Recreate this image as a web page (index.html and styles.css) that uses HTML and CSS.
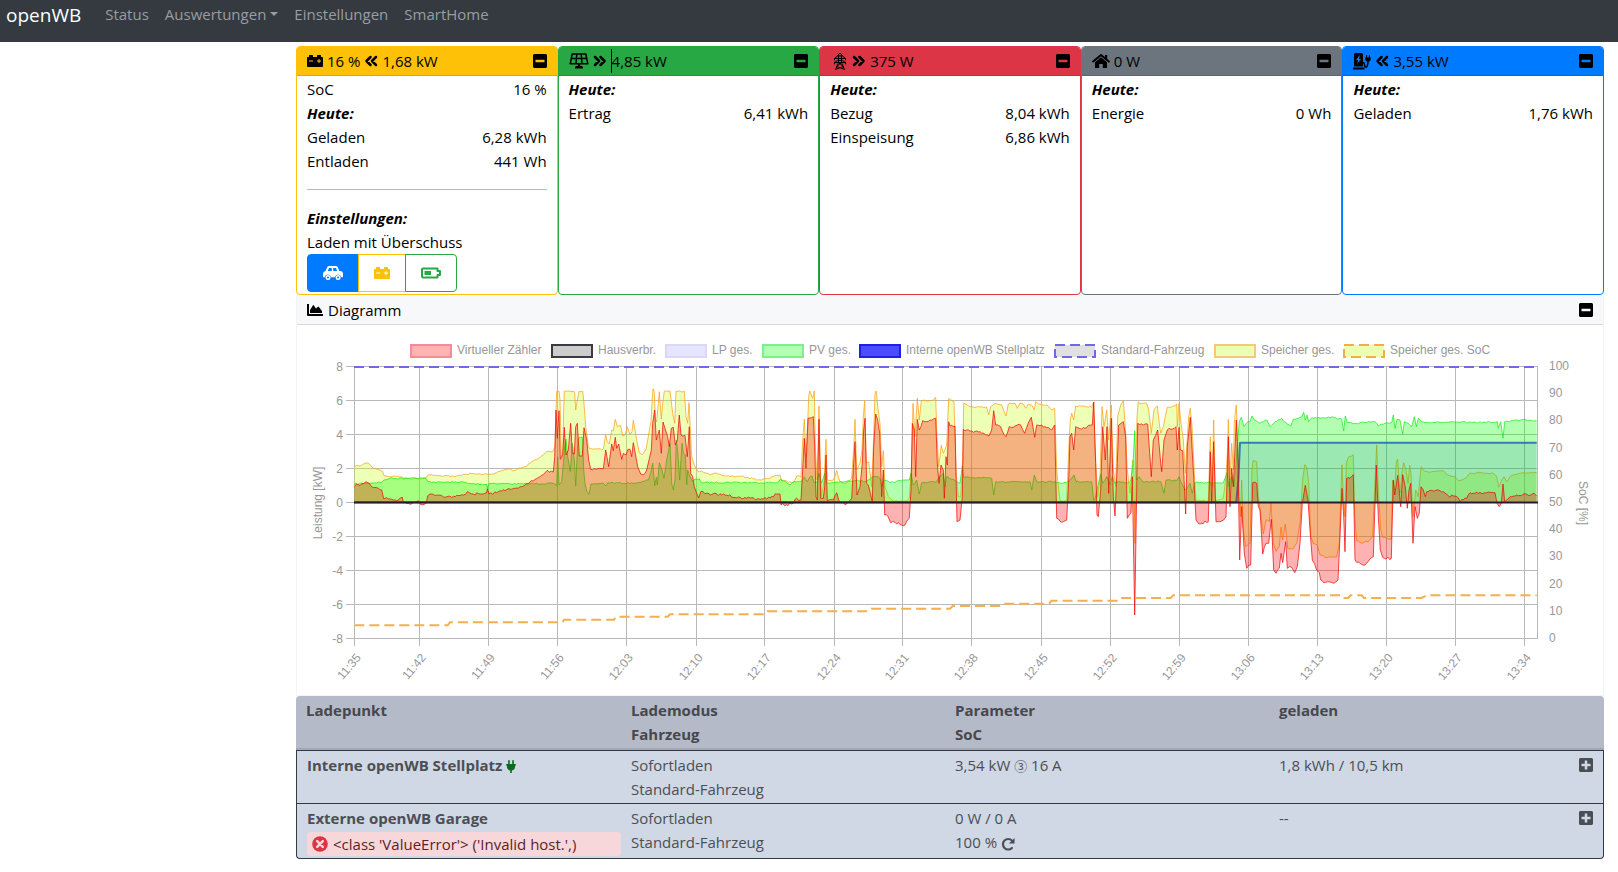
FILE: index.html
```
<!DOCTYPE html>
<html lang="de">
<head>
<meta charset="utf-8">
<title>openWB</title>
<link rel="stylesheet" href="styles.css">
</head>
<body>
<svg class="sprite" aria-hidden="true">
  <symbol id="i-minus" viewBox="0 0 448 512"><path d="M400 32H48C21.500 32 0 53.500 0 80v352c0 26.500 21.500 48 48 48h352c26.500 0 48-21.500 48-48V80c0-26.500-21.500-48-48-48zM92 296c-6.600 0-12-5.400-12-12v-56c0-6.600 5.400-12 12-12h264c6.600 0 12 5.400 12 12v56c0 6.600-5.400 12-12 12H92z"/></symbol>
  <symbol id="i-plus" viewBox="0 0 448 512"><path d="M400 32H48C21.500 32 0 53.500 0 80v352c0 26.500 21.500 48 48 48h352c26.500 0 48-21.500 48-48V80c0-26.500-21.500-48-48-48zM368 284c0 6.600-5.400 12-12 12h-92v92c0 6.600-5.400 12-12 12h-56c-6.600 0-12-5.400-12-12v-92H92c-6.600 0-12-5.400-12-12v-56c0-6.600 5.400-12 12-12h92v-92c0-6.600 5.400-12 12-12h56c6.600 0 12 5.400 12 12v92h92c6.600 0 12 5.400 12 12v56z"/></symbol>
  <symbol id="i-battery" viewBox="0 0 512 512"><path d="M480 128h-32V80c0-8.840-7.160-16-16-16h-96c-8.840 0-16 7.160-16 16v48H192V80c0-8.840-7.160-16-16-16H80c-8.840 0-16 7.160-16 16v48H32c-17.670 0-32 14.330-32 32v256c0 17.670 14.330 32 32 32h448c17.670 0 32-14.330 32-32V160c0-17.670-14.330-32-32-32zM192 264c0 4.420-3.580 8-8 8H72c-4.420 0-8-3.580-8-8v-16c0-4.420 3.580-8 8-8h112c4.420 0 8 3.580 8 8v16zm256 0c0 4.420-3.580 8-8 8h-40v40c0 4.420-3.580 8-8 8h-16c-4.420 0-8-3.580-8-8v-40h-40c-4.420 0-8-3.580-8-8v-16c0-4.420 3.580-8 8-8h40v-40c0-4.420 3.580-8 8-8h16c4.420 0 8 3.580 8 8v40h40c4.420 0 8 3.580 8 8v16z"/></symbol>
  <symbol id="i-left" viewBox="0 0 14 16"><path class="line bold" d="M6.500 4 2.500 8l4 4M12 4 8 8l4 4"/></symbol>
  <symbol id="i-right" viewBox="0 0 14 16"><path class="line bold" d="M2 4l4 4-4 4M7.500 4l4 4-4 4"/></symbol>
  <symbol id="i-solar" viewBox="0 0 20 16"><path class="line w1" d="M3.200 1h13.600l2 9.800H1.200zM2.400 5.500h15.200M7.800 1 7 10.800M12.200 1l.8 9.800"/><path d="M8.800 11h2.400v2h1.300a1.500 1.500 0 0 1 1.500 1.500v1H6v-1A1.500 1.500 0 0 1 7.500 13h1.300z"/></symbol>
  <symbol id="i-pylon" viewBox="-3 0 18 18"><path class="line thin" d="M4.500 4 7 1l2.500 3M1.500 6.500 4.500 4h5l3 2.500v1.500M1.500 6.500V8M1.500 6.500h11M1.500 10.500l3-2h5l3 2V12M1.500 10.500V12M1.500 10.500h11M5.500 4v6.500l-3 7M8.500 4v6.500l3 7M5.500 10.500l5 4M8.500 10.500l-5 4M3.500 14.500l7 2.500M10.500 14.500l-7 2.500"/></symbol>
  <symbol id="i-home" viewBox="0 0 18 16"><path class="line w2" d="M1.200 8.500 9 2l7.800 6.500"/><path d="M3 9.200 9 4.200l6 5V14.500a.5.500 0 0 1-.5.500h-3.700v-4H7.200v4H3.500a.5.500 0 0 1-.5-.5zM13 2h2.200v4.600L13 4.700z"/></symbol>
  <symbol id="i-station" viewBox="0 0 18 18"><path fill-rule="evenodd" d="M2.500 1h6A1.500 1.500 0 0 1 10 2.500V14.500H1V2.500A1.500 1.500 0 0 1 2.500 1zM6.300 3.500 3 8h2.100l-.8 3.500L8 7H5.900l1-3.500zM0 15.500h11.500v2H0z"/><path class="line w1" d="M10 10.500c1.600 0 1.400 2 1.700 3.500.3 1.500 2 1.500 2.500 0 .4-1.500.8-2.500.8-4"/><path d="M12.300 5.500h5.400V7a2.700 2.700 0 0 1-5.400 0zM13 3.300h1.200v2.200H13zM15.800 3.300H17v2.200h-1.200z"/></symbol>
  <symbol id="i-car" viewBox="0 0 20 16"><path fill-rule="evenodd" d="M6.200 1h6.600c.8 0 1.500.4 1.900 1.100L16.300 6h.7a3 3 0 0 1 3 3v2.500a.7.700 0 0 1-.7.700h-1.100a3.200 3.200 0 0 0-6.300 0H8.100a3.200 3.200 0 0 0-6.300 0H.7a.7.700 0 0 1-.7-.7V9a3 3 0 0 1 2.500-3l1.700-3.800a2.200 2.200 0 0 1 2-1.200zM4.700 6h4.100V3H6.100zM10.200 3V6h4L12.900 3z"/><path fill-rule="evenodd" d="M2.500 12.500a2.500 2.500 0 1 0 5 0 2.500 2.500 0 1 0-5 0zm1.500 0a1 1 0 1 0 2 0 1 1 0 1 0-2 0zM12.600 12.500a2.500 2.500 0 1 0 5 0 2.500 2.500 0 1 0-5 0zm1.500 0a1 1 0 1 0 2 0 1 1 0 1 0-2 0z"/></symbol>
  <symbol id="i-half" viewBox="0 0 20 16"><path class="line w2" d="M2 3.500h14.500v2.500H19v4h-2.500v2.500H2a1 1 0 0 1-1-1v-7a1 1 0 0 1 1-1z"/><path d="M3.500 6H10v4H3.500z"/></symbol>
  <symbol id="i-area" viewBox="0 0 16 16"><path d="M0 2h2v10h14v2H1a1 1 0 0 1-1-1zM3 11V8l3-4.800a.4.400 0 0 1 .7 0L9 6.500l2-1.800a.5.500 0 0 1 .7.100L15 9v2z"/></symbol>
  <symbol id="i-plug" viewBox="0 0 12 16"><path d="M2.500 1a1 1 0 0 1 2 0v4h-2zM7.500 1a1 1 0 0 1 2 0v4h-2zM.5 5h11a.5.500 0 0 1 .5.500v1a.5.500 0 0 1-.5.500H11v1a5 5 0 0 1-4 4.900V16H5v-3.100A5 5 0 0 1 1 8V7H.5a.5.500 0 0 1-.5-.5v-1A.5.500 0 0 1 .5 5z"/></symbol>
  <symbol id="i-error" viewBox="0 0 16 16"><circle cx="8" cy="8" r="7.800"/><path class="cross" d="m5.200 5.200 5.600 5.600M10.800 5.200l-5.600 5.600"/></symbol>
  <symbol id="i-redo" viewBox="0 0 16 16"><path class="line bold" d="M12.500 12.500A6 6 0 1 1 12.500 4"/><path d="M15.500 1v6.500H9z"/></symbol>
</svg>

<nav class="navbar">
  <a class="brand" href="#">openWB</a>
  <a class="nav-link" href="#">Status</a>
  <a class="nav-link dropdown" href="#">Auswertungen</a>
  <a class="nav-link" href="#">Einstellungen</a>
  <a class="nav-link" href="#">SmartHome</a>
</nav>

<main class="content">
  <section class="cards">
    <article class="card yellow">
      <header class="card-head"><svg class="icon"><use href="#i-battery"/></svg><span>16 %</span><svg class="icon arrows"><use href="#i-left"/></svg><span>1,68 kW</span><button class="toggle" aria-label="Einklappen"><svg class="icon sq"><use href="#i-minus"/></svg></button></header>
      <div class="card-body">
        <div class="row"><span>SoC</span><span>16 %</span></div>
        <div class="title">Heute:</div>
        <div class="row"><span>Geladen</span><span>6,28 kWh</span></div>
        <div class="row"><span>Entladen</span><span>441 Wh</span></div>
        <hr class="divider">
        <div class="title">Einstellungen:</div>
        <div>Laden mit Überschuss</div>
        <div class="btn-group">
          <button class="btn car" aria-label="Fahrzeug"><svg class="icon wide"><use href="#i-car"/></svg></button>
          <button class="btn storage" aria-label="Speicher"><svg class="icon"><use href="#i-battery"/></svg></button>
          <button class="btn soc" aria-label="Mindest-SoC"><svg class="icon wide"><use href="#i-half"/></svg></button>
        </div>
      </div>
    </article>
    <article class="card green">
      <header class="card-head"><svg class="icon wide"><use href="#i-solar"/></svg><svg class="icon arrows"><use href="#i-right"/></svg><span class="caret">4,85 kW</span><button class="toggle" aria-label="Einklappen"><svg class="icon sq"><use href="#i-minus"/></svg></button></header>
      <div class="card-body">
        <div class="title">Heute:</div>
        <div class="row"><span>Ertrag</span><span>6,41 kWh</span></div>
      </div>
    </article>
    <article class="card red">
      <header class="card-head"><svg class="icon tall"><use href="#i-pylon"/></svg><svg class="icon arrows"><use href="#i-right"/></svg><span>375 W</span><button class="toggle" aria-label="Einklappen"><svg class="icon sq"><use href="#i-minus"/></svg></button></header>
      <div class="card-body">
        <div class="title">Heute:</div>
        <div class="row"><span>Bezug</span><span>8,04 kWh</span></div>
        <div class="row"><span>Einspeisung</span><span>6,86 kWh</span></div>
      </div>
    </article>
    <article class="card gray">
      <header class="card-head"><svg class="icon house"><use href="#i-home"/></svg><span>0 W</span><button class="toggle" aria-label="Einklappen"><svg class="icon sq"><use href="#i-minus"/></svg></button></header>
      <div class="card-body">
        <div class="title">Heute:</div>
        <div class="row"><span>Energie</span><span>0 Wh</span></div>
      </div>
    </article>
    <article class="card blue">
      <header class="card-head"><svg class="icon tall"><use href="#i-station"/></svg><svg class="icon arrows"><use href="#i-left"/></svg><span>3,55 kW</span><button class="toggle" aria-label="Einklappen"><svg class="icon sq"><use href="#i-minus"/></svg></button></header>
      <div class="card-body">
        <div class="title">Heute:</div>
        <div class="row"><span>Geladen</span><span>1,76 kWh</span></div>
      </div>
    </article>
  </section>

  <section class="diagram">
    <header class="diagram-head"><svg class="icon"><use href="#i-area"/></svg><span>Diagramm</span><button class="toggle" aria-label="Einklappen"><svg class="icon sq"><use href="#i-minus"/></svg></button></header>
    <svg class="chart" id="chart" viewBox="297 325 1306 370" role="img" aria-label="Leistungsverlauf"></svg>
  </section>

  <table class="points">
    <colgroup><col class="first"><col class="c"><col class="c"><col></colgroup>
    <thead>
      <tr><th>Ladepunkt</th><th>Lademodus<br>Fahrzeug</th><th>Parameter<br>SoC</th><th>geladen</th></tr>
    </thead>
    <tbody>
      <tr>
        <td><b>Interne openWB Stellplatz</b> <svg class="icon plug"><use href="#i-plug"/></svg></td>
        <td>Sofortladen<br>Standard-Fahrzeug</td>
        <td>3,54 kW <span class="phase">③</span> 16 A</td>
        <td><div class="row"><span>1,8 kWh / 10,5 km</span><button class="toggle" aria-label="Ausklappen"><svg class="icon sq"><use href="#i-plus"/></svg></button></div></td>
      </tr>
      <tr>
        <td><b>Externe openWB Garage</b><div class="alert"><svg class="icon err"><use href="#i-error"/></svg><span>&lt;class 'ValueError'&gt; ('Invalid host.',)</span></div></td>
        <td>Sofortladen<br>Standard-Fahrzeug</td>
        <td>0 W / 0 A<br>100 % <svg class="icon redo"><use href="#i-redo"/></svg></td>
        <td><div class="row"><span>--</span><button class="toggle" aria-label="Ausklappen"><svg class="icon sq"><use href="#i-plus"/></svg></button></div></td>
      </tr>
    </tbody>
  </table>
</main>
<script src="chart.js"></script>
</body>
</html>
```
FILE: styles.css
```
* { box-sizing: border-box; }
body {
  margin: 0;
  background: #fff;
  color: #000;
  font: 15px/24px "Open Sans", "Noto Sans", sans-serif;
}
.sprite { position: absolute; width: 0; height: 0; }
.icon { width: 16px; height: 16px; fill: currentColor; flex: none; vertical-align: middle; }
.icon.wide { width: 20px; }
.icon.arrows { width: 14px; }
.icon.sq { width: 14px; }
.icon.tall { width: 18px; height: 18px; }
.icon.house { width: 18px; }
.line { fill: none; stroke: currentColor; stroke-linecap: round; stroke-linejoin: round; }
.bold { stroke-width: 2.5; }
.w2 { stroke-width: 2; }
.w1 { stroke-width: 1.5; }
.thin { stroke-width: 1; }
.cross { stroke: #f8d7da; stroke-width: 2.5; stroke-linecap: round; }

.navbar {
  display: flex;
  align-items: flex-start;
  height: 42px;
  padding: 0 6px;
  background: #343a40;
}
.brand { margin-right: 16px; color: #fff; font-size: 19px; line-height: 30px; text-decoration: none; }
.nav-link { padding: 2px 8px; color: #9a9da0; text-decoration: none; }
.dropdown::after {
  content: "";
  display: inline-block;
  margin-left: 4px;
  vertical-align: 4px;
  border: 4px solid transparent;
  border-top-color: currentColor;
  border-bottom: 0;
}

.content { padding: 4px 14px 12px 296px; }
.cards { display: grid; grid-template-columns: repeat(5, 1fr); }
.card { border: 1px solid var(--c); border-radius: 4px; overflow: hidden; }
.yellow { --c: #ffc107; }
.green { --c: #28a745; }
.red { --c: #dc3545; }
.gray { --c: #6c757d; }
.blue { --c: #007bff; }
.card-head {
  display: flex;
  align-items: center;
  gap: 4px;
  padding: 2px 10px;
  background: var(--c);
  border-bottom: 1px solid rgba(0, 0, 0, .125);
}
.card-body { padding: 1px 10px 2px; }
.row { display: flex; justify-content: space-between; }
.title { font-weight: 700; font-style: italic; }
.toggle { display: flex; align-items: center; margin-left: auto; padding: 0; border: 0; background: none; color: inherit; }
.caret { border-left: 1px solid #000; }
.divider { height: 1px; margin: 16px 0; border: 0; background: #eabb35; }
.btn-group { display: flex; }
.btn {
  display: flex;
  align-items: center;
  height: 38px;
  padding: 0 15px;
  border: 1px solid;
  background: #fff;
}
.btn + .btn { margin-left: -1px; }
.car { background: #007bff; border-color: #007bff; border-radius: 4px 0 0 4px; color: #fff; }
.storage { color: #ffc107; }
.soc { color: #28a745; border-radius: 0 4px 4px 0; }

.diagram { border: 1px solid #f4f4f4; border-top: 0; }
.diagram-head {
  display: flex;
  align-items: center;
  gap: 5px;
  padding: 3px 10px 2px;
  background: #f7f8f9;
  border-bottom: 1px solid #d6d7d8;
}
.chart { display: block; width: 100%; font: 12px "Liberation Sans", Arial, sans-serif; }
.chart text { fill: #979797; }
.grid { stroke: #b9b9b9; stroke-width: 1; }

.points { width: 100%; table-layout: fixed; border-spacing: 0; color: #4b4f54; }
.points .first { width: 325px; }
.points .c { width: 324px; }
.points th, .points td { padding: 2px 10px; text-align: left; vertical-align: top; }
.points th { background: #b5bac8; border-bottom: 2px solid #a3a8b5; color: #45484d; }
.points th:first-child { border-radius: 4px 0 0 0; }
.points th:last-child { border-radius: 0 4px 0 0; }
.points td { background: #d0d7e5; border-top: 1px solid #343a40; }
.points td:first-child { border-left: 1px solid #343a40; padding-right: 0; }
.points td:last-child { border-right: 1px solid #343a40; }
.points tr:last-child td { border-bottom: 1px solid #343a40; }
.points tr:last-child td:first-child { border-bottom-left-radius: 4px; }
.points tr:last-child td:last-child { border-bottom-right-radius: 4px; }
.alert { display: flex; align-items: center; gap: 5px; margin-top: 2px; padding: 0 5px; border-radius: 4px; background: #f8d7da; color: #5b1f27; }
.plug { width: 10px; height: 13px; color: #0a6b1c; }
.err { color: #dc3545; }
.redo { width: 14px; height: 14px; }
.phase { font-family: "Noto Sans CJK JP", sans-serif; font-size: 13px; line-height: 20px; }
```
FILE: chart.js
```
// Samples are stored in blocks; every block has its own origin and a
// resolution of three steps per chart unit: [originX, originY, "x,y x,y ..."].
const A = [340, 360], B = [730, 330], C = [1160, 330];

const storage = [
  [...A, "43,320 55,317 65,316 78,309 88,312 97,322 110,327 120,330 128,335 132,347 150,350 160,348 186,350 190,355 215,353 240,356 258,354 263,346 275,344 300,347 320,347 345,350 370,343 395,341 430,343 450,343 470,338 490,331 508,326 520,333 540,324 555,320 575,305 600,292 615,280 620,275 638,275 645,260 648,150 650,95 657,94 660,120 664,290 668,280 671,150 673,94 702,94 704,100 707,150 712,120 717,94 728,94 731,120 737,200 745,260 750,267 790,268 793,250 797,224 802,245 808,252 815,210 820,212 826,178 832,200 842,197 848,228 855,225 862,200 870,225 876,215 880,181 886,215 892,250 898,278 907,284 918,268 925,230 933,185 936,130 939,86 943,95 946,175 950,185 958,95 962,150 964,178 968,130 973,94 990,94 998,160 1004,190 1008,94 1033,94 1038,170 1043,190 1047,128 1050,190 1055,290 1063,315 1075,335 1085,333 1110,345 1130,340 1150,347 1195,350"],
  [...B, "30,438 50,442 90,450 120,445 135,436 150,435 155,452 190,458 200,438 213,440 218,330 223,268 228,380 233,280 236,200 239,183 248,205 253,183 256,350 261,450 264,350 267,228 270,380 274,500 282,455 288,328 292,450 310,450 320,422 330,455 345,462 365,445 372,340 375,268 380,420 390,400 396,360 400,260 404,212 409,400 416,395 425,470 430,350 435,190 439,183 443,230 450,280 455,410 460,362 465,470 475,500 490,513 530,513 538,505 545,400 549,220 555,320 562,205 568,270 574,212 610,210 617,202 620,300 626,410 634,346 640,370 650,345 656,206 672,215 678,420 685,500 692,500 698,400 701,220 720,230 770,232 776,255 782,230 795,220 815,225 828,258 835,222 855,220 862,235 870,220 880,222 887,235 895,222 905,225 913,240 917,215 925,222 955,228 965,240 974,235 980,420 990,512 1010,512 1017,340 1021,270 1025,250 1031,270 1037,228 1060,228 1085,232 1091,216 1096,380 1103,500 1110,440 1116,230 1122,290 1130,240 1136,330 1144,225 1150,420 1157,470 1163,260 1172,225 1180,212 1186,290 1192,420 1200,490 1208,390 1211,400 1215,640 1218,400 1221,260 1225,215 1230,222 1250,220 1256,240 1264,310 1272,240 1282,228 1288,280"],
  [...C, "2,310 10,290 22,232 45,228 50,222 52,290 57,220 63,280 70,330 76,430 80,350 86,260 91,235 97,300 103,430 108,512 145,512 151,320 156,470 161,270 167,512 190,505 198,440 203,350 205,268 210,450 215,340 220,420 223,280 227,235 229,225 233,330 238,500 241,560 245,450 250,600 257,650 270,640 276,420 279,392 290,395 295,500 303,560 310,612 318,570 328,575 333,520 340,640 348,664 358,650 363,592 368,630 376,582 383,655 400,655 410,640 420,580 428,450 434,404 440,410 446,460 452,620 460,640 472,645 480,675 500,683 530,680 538,640 543,480 546,404 551,520 555,560 559,400 565,382 580,374 584,560 590,632 605,640 625,635 638,620 643,500 650,345 655,480 662,600 668,622 694,628 698,452 704,480 709,395 713,388 720,490 725,430 731,398 738,420 744,460 749,406 753,430 759,560 767,480 775,500 780,440 784,410 795,425 820,424 850,422 862,435 885,440 895,452 915,445 930,430 960,428 1000,430 1010,440 1016,472 1025,450 1032,440 1040,455 1055,435 1090,428 1130,428"]
];
const meter = [
  [...A, "43,380 55,374 70,372 80,366 88,370 95,380 110,383 125,390 131,416 140,413 155,418 175,420 187,412 190,427 205,430 215,432 235,422 240,432 258,430 263,408 275,402 300,405 320,410 345,410 370,405 382,395 400,402 430,402 440,398 442,386 447,402 470,398 490,389 515,388 535,384 555,375 575,362 600,350 615,338 622,331 640,336 644,290 648,150 652,235 657,152 661,298 668,285 673,202 678,285 685,270 692,190 697,280 703,282 707,200 712,190 718,288 727,288 732,203 740,240 746,300 752,328 790,326 797,270 806,320 815,252 820,272 826,232 830,265 836,252 845,298 850,280 858,285 864,268 870,268 875,290 880,248 886,280 893,320 902,342 910,345 920,330 927,300 934,270 938,190 944,150 949,240 958,210 964,280 969,186 975,205 983,230 988,260 994,205 1000,202 1006,255 1012,240 1018,165 1023,225 1035,226 1042,290 1048,200 1052,340 1058,350 1063,380 1070,400 1076,414 1082,395 1100,400 1110,405 1130,402 1160,406 1195,411"],
  [...B, "30,502 50,505 80,508 120,503 140,492 150,492 153,525 185,522 200,505 213,510 219,400 223,325 228,415 234,265 250,260 254,350 258,500 262,510 267,268 272,505 280,505 284,470 288,375 292,512 310,510 320,488 328,515 345,524 365,505 371,400 375,335 381,495 390,470 397,400 401,300 405,265 410,460 415,465 427,515 431,350 437,252 443,270 449,310 455,500 460,420 464,555 474,560 482,578 495,577 510,583 525,585 538,565 543,480 547,280 553,300 557,440 562,268 568,300 578,272 600,270 617,265 622,400 627,460 633,405 640,420 643,505 648,380 652,405 656,275 660,288 675,288 681,575 690,570 697,500 700,298 720,303 750,305 777,318 785,300 791,242 797,285 812,290 828,320 838,290 855,288 862,285 872,285 884,310 890,292 904,262 914,322 920,285 935,285 945,290 965,300 974,285 980,565 995,577 1010,570 1016,450 1020,320 1025,310 1031,360 1037,290 1050,296 1070,292 1087,285 1091,216 1097,400 1101,555 1105,560 1112,480 1118,290 1126,390 1131,290 1136,490 1144,265 1150,500 1155,558 1162,400 1166,285 1180,275 1187,320 1192,565 1203,550 1207,440 1214,855 1219,560 1223,280 1240,285 1253,282 1259,370 1264,440 1270,330 1283,300 1288,350"],
  [...C, "2,400 5,425 12,330 22,300 48,290 52,360 57,292 61,360 68,362 77,552 82,350 91,262 98,390 103,470 108,570 115,580 145,575 151,365 155,520 161,335 168,575 185,573 198,560 205,320 210,530 215,415 220,470 229,270 234,400 239,690 245,530 253,670 260,715 272,705 278,458 290,460 295,530 300,540 308,672 318,640 326,640 334,568 341,720 348,730 358,715 363,670 368,698 377,635 382,715 395,712 404,728 412,710 420,640 427,520 436,466 444,510 450,600 457,690 470,720 478,728 482,750 497,757 520,760 534,750 540,620 546,475 551,560 555,665 560,445 570,445 580,434 585,690 600,700 615,705 640,680 645,520 649,405 655,560 661,660 668,682 694,686 700,450 704,495 713,436 722,530 728,434 736,470 742,535 747,480 752,460 759,640 765,530 772,565 778,550 783,470 790,480 796,500 800,485 825,482 850,485 865,497 890,500 900,515 920,505 930,488 960,487 1005,488 1011,520 1018,530 1024,520 1029,462 1034,515 1050,500 1070,495 1090,492 1115,493 1122,490 1130,498"]
];
const solar = [
  [...A, "43,372 125,367 132,360 150,355 258,355 264,365 300,367 370,366 385,371 440,373 442,385 447,370 550,372 640,370 650,378 653,290 657,375 665,365 671,300 674,260 678,237 683,290 691,335 697,250 703,300 707,378 714,235 728,233 731,330 735,372 741,395 747,403 753,372 790,370 797,378 803,368 860,370 900,368 925,360 932,340 938,310 944,378 949,352 952,375 958,308 966,330 972,355 980,300 990,250 995,370 1000,390 1005,360 1009,240 1013,275 1019,360 1026,250 1030,280 1036,285 1040,375 1043,330 1050,350 1058,365 1065,357 1078,357 1083,368 1195,367"],
  [...B, "30,458 140,458 151,448 170,458 180,465 192,455 215,455 222,440 232,455 240,440 246,438 252,458 262,455 267,430 275,460 284,430 290,460 345,455 380,450 405,455 430,440 440,440 450,445 455,470 462,450 480,458 525,450 538,450 543,430 550,465 560,450 568,492 575,458 620,455 628,440 640,430 645,470 650,440 680,455 690,460 697,408 701,442 785,445 791,495 797,455 900,455 905,480 913,435 920,455 975,455 985,458 1010,458 1020,450 1032,435 1038,455 1085,455 1092,520 1103,470 1112,432 1118,460 1130,440 1140,465 1147,440 1153,458 1165,455 1195,460 1203,450 1209,400 1214,302 1219,450 1227,440 1240,455 1288,455"],
  [...C, "2,455 12,490 18,450 50,452 57,440 62,455 75,480 90,460 97,490 104,458 190,458 201,428 207,470 215,440 222,470 228,400 233,330 238,275 244,262 252,290 260,278 270,275 276,258 283,270 300,280 320,270 330,290 345,275 365,265 372,275 392,288 400,268 425,262 431,247 436,270 441,255 446,275 455,263 520,262 545,268 551,303 556,258 562,278 585,280 645,275 655,288 680,278 695,278 700,255 705,295 711,268 720,270 728,312 733,275 745,280 755,290 763,260 769,290 775,265 785,275 800,277 1000,277 1012,275 1015,295 1022,275 1029,325 1034,275 1090,268 1130,272"]
];
const charge = [
  [...A, "43,427"],
  [...C, "229,517 235,450 240,338 1130,338"]
];
const soc = [
  [...A, "43,796 323,796 330,787 668,787 672,779 822,779 828,770 983,770 990,763 1195,763"],
  [...B, "30,853 105,853 112,844 415,844 424,836 660,836 668,828 810,828 818,821 958,821 964,812 1165,812 1170,804 1288,804"],
  [...C, "2,804 32,804 40,796 540,796 545,804 565,804 572,796 605,796 612,804 785,804 800,796 1130,796"]
];

const ZERO = 502.5;
const chart = document.getElementById("chart");

function add(name, attrs, text) {
  const el = document.createElementNS("http://www.w3.org/2000/svg", name);
  for (const key in attrs) el.setAttribute(key, attrs[key]);
  if (text !== undefined) el.textContent = text;
  chart.appendChild(el);
}

function unpack(blocks, ripple) {
  const out = [];
  let seed = 7;
  for (const [ox, oy, data] of blocks) {
    let prev = null;
    for (const pair of data.split(" ")) {
      const [x, y] = pair.split(",").map(Number);
      if (prev && ripple) {
        const n = Math.floor((x - prev[0]) / 5);
        for (let i = 1; i < n; i++) {
          seed = (seed * 16807) % 2147483647;
          const t = i / n, r = (seed / 2147483647 - 0.5) * 2 * ripple;
          out.push([ox + (prev[0] + (x - prev[0]) * t) / 3, oy + (prev[1] + (y - prev[1]) * t + r) / 3]);
        }
      }
      out.push([ox + x / 3, oy + y / 3]);
      prev = [x, y];
    }
  }
  return out;
}

function area(blocks, fill, stroke, width, ripple) {
  const pts = unpack(blocks, ripple);
  const line = pts.map(p => p[0].toFixed(1) + "," + p[1].toFixed(1)).join(" ");
  const first = pts[0][0], last = pts[pts.length - 1][0];
  add("polygon", { points: `${first},${ZERO} ${line} ${last},${ZERO}`, fill });
  add("polyline", { points: line, fill: "none", stroke, "stroke-width": width, "stroke-linejoin": "round" });
}

const ticksX = [354.5, 419.5, 488.5, 557.5, 626.5, 696.5, 764.5, 834.5, 902.5, 971.5, 1041.5, 1110.5, 1179.5, 1248.5, 1317.5, 1386.5, 1455.5, 1524.5];
const times = ["11:35", "11:42", "11:49", "11:56", "12:03", "12:10", "12:17", "12:24", "12:31", "12:38", "12:45", "12:52", "12:59", "13:06", "13:13", "13:20", "13:27", "13:34"];
ticksX.forEach((x, i) => {
  add("line", { class: "grid", x1: x, x2: x, y1: 367, y2: 646 });
  add("text", { "text-anchor": "end", transform: `translate(${x + 7} 658) rotate(-50)` }, times[i]);
});
add("line", { class: "grid", x1: 1537.5, x2: 1537.5, y1: 367, y2: 638 });
for (let i = 0; i <= 8; i++) {
  const y = Math.floor(366.5 + i * 34) + 0.5;
  add("line", { class: "grid", x1: 346, x2: 1538, y1: y, y2: y });
  add("text", { x: 343, y: y + 4, "text-anchor": "end" }, String(8 - 2 * i));
}
for (let i = 0; i <= 10; i++) {
  add("text", { x: 1549, y: 370 + i * 27.2 }, String(100 - 10 * i));
}
add("text", { "text-anchor": "middle", transform: "translate(322 503) rotate(-90)" }, "Leistung [kW]");
add("text", { "text-anchor": "middle", transform: "translate(1579 503) rotate(90)" }, "SoC [%]");

area(storage, "rgba(200,255,13,.3)", "rgba(255,155,13,.7)", 1, 2);
area(charge, "rgba(0,0,255,.13)", "rgba(0,0,255,.7)", 2, 0);
area(solar, "rgba(0,255,0,.3)", "rgba(10,240,10,.7)", 1, 2);
area(meter, "rgba(255,0,0,.3)", "rgba(240,0,0,.7)", 1, 4);
add("line", { x1: 354, x2: 1538, y1: 502.5, y2: 502.5, stroke: "#2a1a30", "stroke-width": 2 });
add("polyline", { points: unpack(soc, 0).map(p => p.join(",")).join(" "), fill: "none", stroke: "#f2b04e", "stroke-width": 2, "stroke-dasharray": "10 5" });
add("line", { x1: 354, x2: 1538, y1: 367, y2: 367, stroke: "#7068e8", "stroke-width": 2, "stroke-dasharray": "10 5" });

const legend = [
  [410, "Virtueller Zähler", "#ffb3b3", "#f78a98"],
  [551, "Hausverbr.", "#cccccc", "#3a3a40"],
  [665, "LP ges.", "#e5e5ff", "#d9d9f6"],
  [762, "PV ges.", "#b3ffb3", "#7df08a"],
  [859, "Interne openWB Stellplatz", "#4c4cff", "#1f1fe6"],
  [1054, "Standard-Fahrzeug", "#e0e0e0", "#7068e8", "10 5"],
  [1214, "Speicher ges.", "#ecffb2", "#f7c877"],
  [1343, "Speicher ges. SoC", "#ecffb2", "#f5ac42", "10 5"]
];
for (const [x, label, fill, stroke, dash] of legend) {
  add("rect", { x: x + 1, y: 345, width: 40, height: 12, fill, stroke, "stroke-width": 2, "stroke-dasharray": dash || "none" });
  add("text", { x: x + 47, y: 354 }, label);
}
```
